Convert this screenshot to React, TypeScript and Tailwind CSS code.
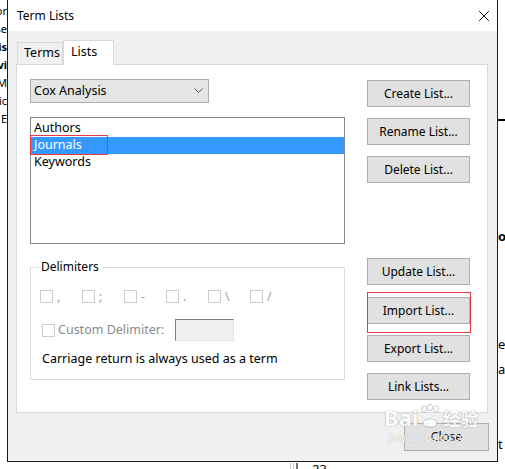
import React from 'react';

const leftBits = ['or', 'se', 'is', 'vi', 'M', 'ic', 'E'];
const rowChecks = [',', ';', '-', '.', '\\', '/'];

function Button({ label }: { label: string }) {
  return (
    <button className="h-[27px] w-[103px] shrink-0 border border-[#adadad] bg-[#e1e1e1] text-[12px] text-black">
      {label}
    </button>
  );
}

function Box() {
  return <span className="h-[13px] w-[13px] shrink-0 border border-[#cccccc] bg-white" />;
}

function Watermark() {
  return (
    <div className="pointer-events-none absolute left-[384px] top-[404px] flex flex-col items-center text-white opacity-90">
      <div className="flex items-end gap-[1px] leading-none [text-shadow:0_0_1px_#9a9a9a,0_0_1px_#9a9a9a]">
        <span className="text-[22px] font-bold">Bai</span>
        <svg width="22" height="24" viewBox="0 0 22 24">
          <g fill="#ffffff" stroke="#b5b5b5" strokeWidth="0.8">
            <ellipse cx="5" cy="5" rx="2.5" ry="3.2" />
            <ellipse cx="11" cy="3.5" rx="2.5" ry="3.2" />
            <ellipse cx="17" cy="5" rx="2.5" ry="3.2" />
            <path d="M4 20 C4 13 18 13 18 20 C18 24 4 24 4 20 Z" />
          </g>
        </svg>
        <span className="text-[18px] font-bold">经验</span>
      </div>
      <span className="mt-[4px] text-[10px] leading-none [text-shadow:0_0_1px_#9a9a9a]">jingyan.baidu.com</span>
    </div>
  );
}

export default function App() {
  return (
    <div className="relative h-[469px] w-[505px] overflow-hidden bg-white font-['Noto_Sans','Noto_Sans_CJK_SC',sans-serif] text-[12px] text-black">
      <div className="flex">
        {/* page behind, left edge */}
        <div className="flex w-[7px] flex-col items-end overflow-hidden pt-[2px] text-[11px] leading-[18px]">
          {leftBits.map((t, i) => (
            <span key={i} className={`whitespace-nowrap ${i === 2 || i === 3 ? 'font-bold' : ''}`}>
              {t}
            </span>
          ))}
        </div>

        {/* dialog */}
        <div className="flex h-[462px] w-[491px] shrink-0 flex-col border-x border-b border-[#1a1a1a] bg-[#f0f0f0]">
          <div className="flex h-[31px] items-center justify-between bg-white pl-[9px] pr-[6px]">
            <span className="text-[12px]">Term Lists</span>
            <svg width="12" height="12" viewBox="0 0 12 12" className="mr-[1px]">
              <path d="M1 1 L11 11 M11 1 L1 11" stroke="#222" strokeWidth="1" />
            </svg>
          </div>

          <div className="flex flex-col pl-[8px] pt-[9px]">
            {/* tabs */}
            <div className="flex h-[24px] items-end pl-[1px]">
              <div className="flex h-[22px] w-[46px] items-center border border-b-0 border-[#d9d9d9] bg-[#f0f0f0] pl-[6px] text-[12.5px]">
                Terms
              </div>
              <div className="relative z-10 -mb-px flex h-[25px] w-[51px] items-start border border-b-0 border-[#d9d9d9] bg-white pl-[7px] pt-[2px] text-[12.5px]">
                Lists
              </div>
            </div>

            {/* panel */}
            <div className="flex h-[349px] w-[472px] border border-[#d9d9d9] bg-white pl-[13px] pr-[17px]">
              <div className="flex w-[315px] flex-col pt-[14px]">
                <div className="flex h-[24px] w-[179px] items-center justify-between border border-[#adadad] bg-[#e5e5e5] pl-[3px] pr-[5px] text-[12.5px]">
                  <span>Cox Analysis</span>
                  <svg width="9" height="6" viewBox="0 0 9 6">
                    <polyline points="0.5,0.5 4.5,4.5 8.5,0.5" fill="none" stroke="#555" strokeWidth="1" />
                  </svg>
                </div>

                <div className="mt-[14px] flex h-[127px] flex-col border border-[#828790] pt-[2px] text-[12.5px]">
                  <div className="flex h-[17px] items-center pl-[3px]">Authors</div>
                  <div className="relative flex h-[17px] items-center bg-[#3399ff] pl-[3px] text-white">
                    Journals
                    <span className="absolute left-[-1px] top-[-2px] h-[20px] w-[78px] border border-[#e8383d]" />
                  </div>
                  <div className="flex h-[17px] items-center pl-[3px]">Keywords</div>
                </div>

                <div className="relative mt-[23px] flex h-[113px] flex-col border border-[#dcdcdc] pl-[9px] pt-[22px]">
                  <span className="absolute left-[8px] top-[-9px] bg-white px-[2px] text-[12px] leading-[16px]">
                    Delimiters
                  </span>
                  <div className="flex h-[13px]">
                    {rowChecks.map((c, i) => (
                      <div key={i} className="flex w-[42px] items-center gap-[4px] text-[#9a9a9a]">
                        <Box />
                        <span className="leading-none">{c}</span>
                      </div>
                    ))}
                  </div>
                  <div className="mt-[16px] flex h-[22px] items-center pl-[2px] text-[#8a8a8a]">
                    <Box />
                    <span className="ml-[3px] w-[117px] text-[12.5px]">Custom Delimiter:</span>
                    <span className="h-[22px] w-[59px] border border-b-[#e3e3e3] border-l-[#7a7a7a] border-r-[#e3e3e3] border-t-[#7a7a7a] bg-[#f0f0f0]" />
                  </div>
                  <div className="mt-[10px] pl-[2px] text-[12.5px] leading-[16px]">
                    Carriage return is always used as a term
                  </div>
                </div>
              </div>

              <div className="ml-[22px] flex w-[103px] flex-col pt-[15px]">
                <Button label="Create List..." />
                <div className="mt-[11px]">
                  <Button label="Rename List..." />
                </div>
                <div className="mt-[11px]">
                  <Button label="Delete List..." />
                </div>
                <div className="mt-[75px]">
                  <Button label="Update List..." />
                </div>
                <div className="relative mt-[12px]">
                  <Button label="Import List..." />
                  <span className="absolute left-0 top-[-5px] h-[41px] w-[104px] border border-[#e8383d]" />
                </div>
                <div className="mt-[11px]">
                  <Button label="Export List..." />
                </div>
                <div className="mt-[11px]">
                  <Button label="Link Lists..." />
                </div>
              </div>
            </div>
          </div>

          <div className="mr-[8px] mt-[10px] flex justify-end">
            <button className="h-[28px] w-[85px] border border-[#adadad] bg-[#e1e1e1] text-[12.5px]">Close</button>
          </div>
        </div>

        {/* page behind, right edge */}
        <div className="flex w-[7px] flex-col overflow-hidden text-[13px]">
          <div className="mt-[119px] h-[2px] w-[7px] shrink-0 bg-black" />
          <span className="mt-[106px] whitespace-nowrap font-bold leading-[18px]">or</span>
          <span className="mt-[90px] whitespace-nowrap leading-[18px]">en</span>
          <span className="mt-[7px] whitespace-nowrap leading-[18px]">an</span>
          <span className="mt-[57px] whitespace-nowrap leading-[18px]">t</span>
        </div>
      </div>

      {/* page behind, bottom edge */}
      <div className="flex h-[7px] items-start overflow-hidden pl-[290px]">
        <div className="mt-[1px] flex h-[7px] gap-[2px]">
          <span className="h-full w-px bg-[#c8c8c8]" />
          <span className="h-full w-px bg-[#c8c8c8]" />
          <span className="h-full w-[2px] bg-[#777]" />
        </div>
        <span className="ml-[14px] mt-[1px] text-[13px] leading-[13px]">23</span>
      </div>

      <Watermark />
    </div>
  );
}
